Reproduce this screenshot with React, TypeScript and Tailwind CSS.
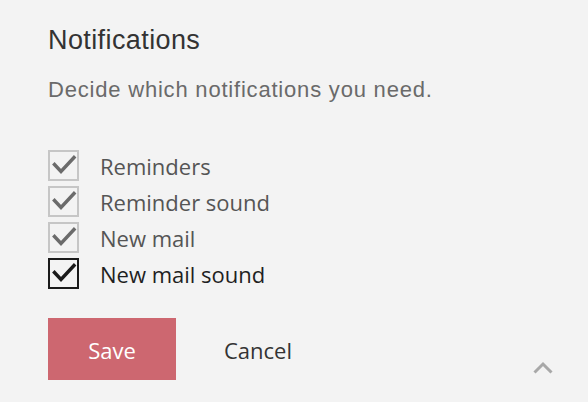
import React, { useState } from "react";

const initialOptions = [
  { label: "Reminders", checked: true, muted: true },
  { label: "Reminder sound", checked: true, muted: true },
  { label: "New mail", checked: true, muted: true },
  { label: "New mail sound", checked: true, muted: false },
];

function CheckIcon({ dark }: { dark: boolean }) {
  return (
    <svg width="26" height="26" viewBox="0 0 26 26" fill="none">
      <path
        d="M3.5 12.5 L10 19.5 L23 5.5"
        stroke={dark ? "#1a1a1a" : "#6b6b6b"}
        strokeWidth="3.4"
        strokeLinecap="square"
      />
    </svg>
  );
}

export default function App() {
  const [options, setOptions] = useState(initialOptions);

  // Toggle a single option
  const toggle = (index: number) => {
    setOptions(options.map((o, i) => (i === index ? { ...o, checked: !o.checked } : o)));
  };

  return (
    <div className="relative h-[402px] w-full bg-[#f3f3f3] pl-[48px] pt-[27px]">
      <h1
        className="text-[27px] leading-none text-[#333333] tracking-[0.4px]"
        style={{ fontFamily: '"Liberation Sans", Arial, sans-serif' }}
      >
        Notifications
      </h1>
      <p
        className="mt-[25px] text-[22px] leading-none text-[#6a6a6a] tracking-[0.8px]"
        style={{ fontFamily: '"Liberation Sans", Arial, sans-serif' }}
      >
        Decide which notifications you need.
      </p>

      {/* Options */}
      <div className="mt-[49px] flex flex-col gap-[6px]">
        {options.map((opt, i) => (
          <label
            key={i}
            onClick={() => toggle(i)}
            className="flex h-[30px] cursor-pointer items-center gap-[21px]"
          >
            <span
              className={
                opt.muted
                  ? "flex h-[31px] w-[31px] items-center justify-center border-2 border-[#c6c6c6]"
                  : "flex h-[31px] w-[31px] items-center justify-center border-2 border-[#1a1a1a]"
              }
            >
              {opt.checked && <CheckIcon dark={!opt.muted} />}
            </span>
            <span
              className={
                opt.muted
                  ? "mt-[3px] text-[22px] text-[#555555]"
                  : "mt-[3px] text-[22px] text-[#1f1f1f]"
              }
              style={{ fontFamily: '"Open Sans", "Noto Sans", sans-serif' }}
            >
              {opt.label}
            </span>
          </label>
        ))}
      </div>

      {/* Buttons */}
      <div
        className="mt-[30px] flex items-center"
        style={{ fontFamily: '"Open Sans", "Noto Sans", sans-serif' }}
      >
        <button className="h-[62px] w-[128px] bg-[#cd6770] pt-[2px] text-[22px] text-white">
          Save
        </button>
        <button className="ml-[48px] pt-[2px] text-[22px] text-[#333333]">Cancel</button>
      </div>

      {/* Scroll up chevron */}
      <svg
        className="absolute left-[533px] top-[361px]"
        width="20"
        height="13"
        viewBox="0 0 20 13"
        fill="none"
      >
        <path d="M1.5 11.5 L10 3 L18.5 11.5" stroke="#a8a8a8" strokeWidth="3" />
      </svg>
    </div>
  );
}
